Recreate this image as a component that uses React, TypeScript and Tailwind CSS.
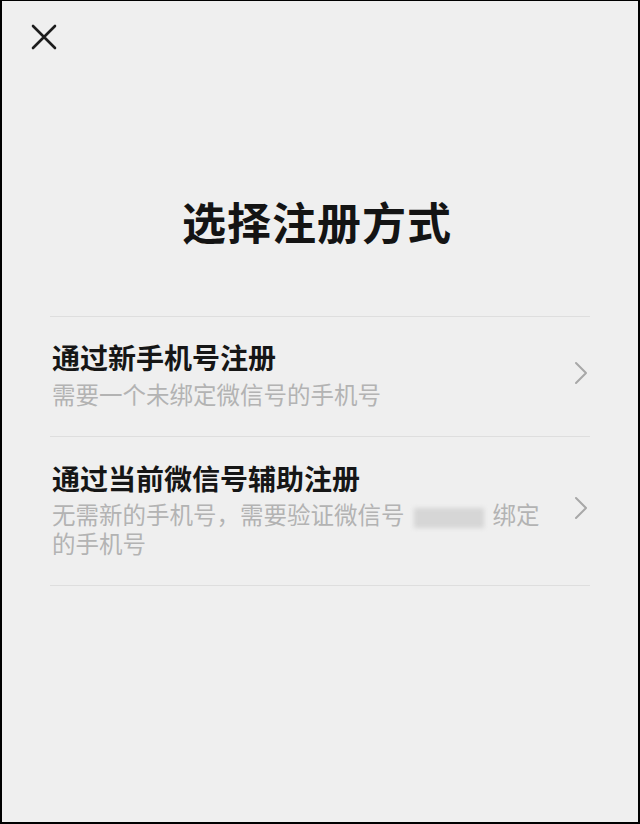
import React from "react";

const font = { fontFamily: '"Noto Sans CJK SC", "Noto Sans", sans-serif' };

function Chevron() {
  return (
    <svg width="14" height="24" viewBox="0 0 14 24" fill="none" className="shrink-0 ml-auto">
      <path d="M2 2 L12 12 L2 22" stroke="#a8a8a8" strokeWidth="2" strokeLinecap="round" strokeLinejoin="round" />
    </svg>
  );
}

export default function App() {
  return (
    <div
      className="w-[640px] h-[824px] bg-[#efefef] border-t border-l-2 border-r-2 border-b-2 border-black flex flex-col"
      style={font}
    >
      <div className="h-[74px] pl-[28px] pt-[22px]">
        <svg width="28" height="28" viewBox="0 0 28 28" fill="none">
          <path d="M3 3 L25 25 M25 3 L3 25" stroke="#1c1c1c" strokeWidth="2.6" strokeLinecap="round" />
        </svg>
      </div>
      <div className="mt-[117px] text-center text-[44px] leading-[58px] font-bold text-[#141414] tracking-[1px] pr-[6px]">
        选择注册方式
      </div>
      <div className="mt-[66px] mx-[48px] border-t border-[#dedede]">
        <div className="flex items-center border-b border-[#dedede] pt-[20px] pb-[27px] pl-[2px] pr-[2px]">
          <div className="flex-1">
            <div className="text-[28px] leading-[40px] font-semibold text-[#161616]">通过新手机号注册</div>
            <div className="mt-[3px] text-[23.5px] leading-[29px] text-[#b3b3b3]">需要一个未绑定微信号的手机号</div>
          </div>
          <Chevron />
        </div>
        <div className="flex items-center border-b border-[#dedede] pt-[21px] pb-[27px] pl-[2px] pr-[2px]">
          <div className="w-[500px] shrink-0">
            <div className="text-[28px] leading-[40px] font-semibold text-[#161616]">通过当前微信号辅助注册</div>
            <div className="mt-[2px] text-[23.5px] leading-[29px] text-[#b3b3b3]">
              无需新的手机号，需要验证微信号
              <span className="inline-block align-middle w-[70px] h-[20px] mx-[9px] bg-[#d6d6d6] blur-[2px]" />
              绑定的手机号
            </div>
          </div>
          <Chevron />
        </div>
      </div>
    </div>
  );
}
